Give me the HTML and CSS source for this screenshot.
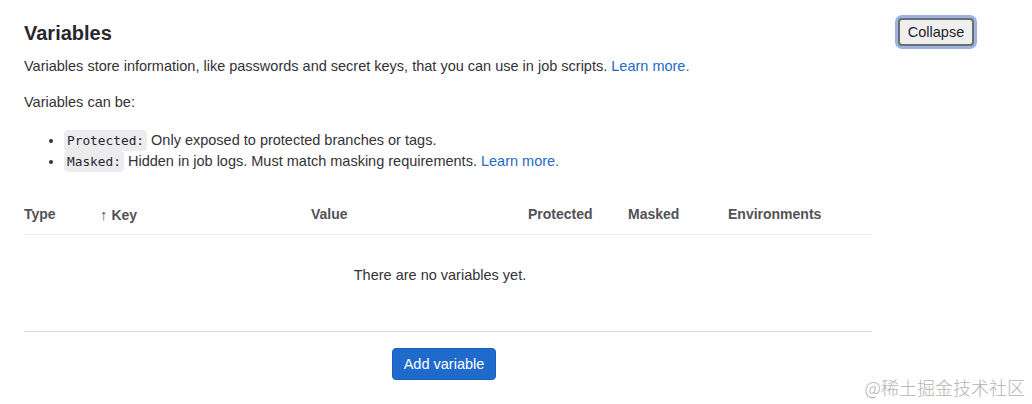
FILE: index.html
```html
<!DOCTYPE html>
<html>
<head>
<meta charset="utf-8">
<link rel="stylesheet" href="styles.css">
</head>
<body>
<section class="settings">
  <div class="settings-header">
    <h2 class="title">Variables</h2>
    <button class="collapse-btn">Collapse</button>
  </div>
  <p class="desc">Variables store information, like passwords and secret keys, that you can use in job scripts. <a class="link" href="#">Learn more.</a></p>
  <p class="desc can-be">Variables can be:</p>
  <ul class="bullets">
    <li><code class="chip">Protected:</code> Only exposed to protected branches or tags.</li>
    <li><code class="chip">Masked:</code> Hidden in job logs. Must match masking requirements. <a class="link" href="#">Learn more.</a></li>
  </ul>
  <div class="table">
    <div class="thead">
      <div class="th">Type</div>
      <div class="th"><span class="arrow">&#8593;</span> Key</div>
      <div class="th">Value</div>
      <div class="th">Protected</div>
      <div class="th">Masked</div>
      <div class="th">Environments</div>
    </div>
    <div class="empty">There are no variables yet.</div>
  </div>
  <div class="actions">
    <button class="add-btn">Add variable</button>
  </div>
</section>
<div class="watermark">@稀土掘金技术社区</div>
</body>
</html>
```
FILE: styles.css
```css
html, body {
  margin: 0;
  padding: 0;
  background: #fff;
}
body {
  font-family: "Liberation Sans", Arial, sans-serif;
  font-size: 14.5px;
  color: #333238;
  position: relative;
  width: 1032px;
  height: 404px;
  overflow: hidden;
}
.settings {
  padding: 15px 0 0 24px;
}
.settings-header {
  display: flex;
  justify-content: space-between;
  align-items: flex-start;
  width: 953px;
}
.title {
  margin: 6px 0 0 0;
  font-size: 20px;
  line-height: 24px;
  font-weight: 700;
  color: #28272d;
}
.collapse-btn {
  font-family: "Liberation Sans", Arial, sans-serif;
  font-size: 14.5px;
  color: #1f1f1f;
  background: #efefef;
  border: 2px solid #6e6e6e;
  border-radius: 4px;
  box-shadow: 0 0 0 3px #99b3e3;
  width: 76px;
  height: 28px;
  padding: 0;
  margin: 3px 3px 0 0;
}
.desc {
  margin: 10px 0 0 0;
  line-height: 20px;
}
.desc.can-be {
  margin-top: 16px;
}
.link {
  color: #1f6bc4;
  text-decoration: none;
}
.bullets {
  margin: 18px 0 0 0;
  padding-left: 40px;
}
.bullets li {
  line-height: 21px;
}
.chip {
  font-family: "DejaVu Sans Mono", monospace;
  font-size: 12.8px;
  background: #ececef;
  border-radius: 4px;
  padding: 3px 3px;
  color: #28272d;
}
.table {
  width: 848px;
  margin-top: 22px;
  border-bottom: 1px solid #dcdcde;
}
.thead {
  display: grid;
  grid-template-columns: 76px 211px 217px 100px 100px 144px;
  height: 40px;
  align-items: center;
  border-bottom: 1px solid #ececef;
  font-size: 14px;
}
.th {
  font-weight: 700;
  color: #535158;
}
.arrow {
  font-weight: 400;
  font-size: 15px;
}
.empty {
  width: 832px;
  text-align: center;
  padding: 30px 0 46px 0;
  line-height: 20px;
}
.actions {
  width: 840px;
  display: flex;
  justify-content: center;
  padding-top: 16px;
}
.add-btn {
  font-family: "Liberation Sans", Arial, sans-serif;
  font-size: 14.5px;
  color: #fff;
  background: #1f6bcb;
  border: 1px solid #1a5fb8;
  border-radius: 4px;
  height: 32px;
  width: 104px;
  padding: 0;
}
.watermark {
  position: absolute;
  right: 7px;
  bottom: 5px;
  font-family: "Noto Sans CJK SC", sans-serif;
  font-size: 18px;
  line-height: 24px;
  color: #b4b4b4;
  font-weight: 300;
}
```
